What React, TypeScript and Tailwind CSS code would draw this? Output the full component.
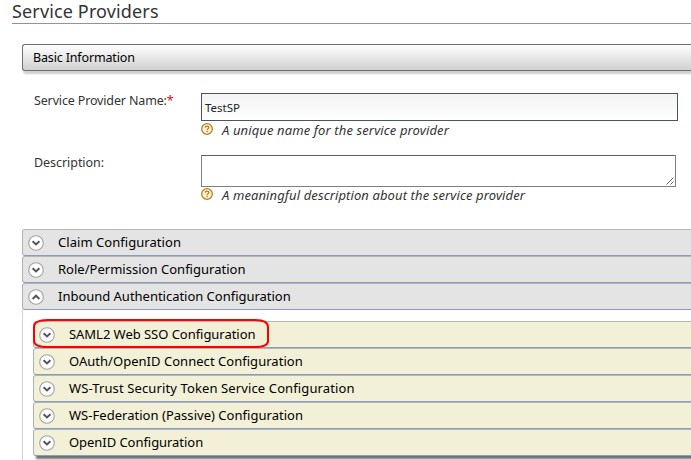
import React from "react";

function Toggle({ up = false }: { up?: boolean }) {
  return (
    <svg className="block h-4 w-4 shrink-0" viewBox="0 0 16 16" fill="none">
      <circle cx="8" cy="8" r="7.3" fill="#fff" stroke="#a3a3a3" strokeWidth="1.1" />
      <path d={up ? "M4.6 9.9L8 6.7L11.4 9.9" : "M4.6 6.3L8 9.5L11.4 6.3"} stroke="#555" strokeWidth="2" />
    </svg>
  );
}

function Hint({ children, spacing }: { children: React.ReactNode; spacing: string }) {
  return (
    <div className="flex h-[18px] items-start">
      <svg className="mt-[2px] block h-3 w-3 shrink-0" viewBox="0 0 12 12" fill="none">
        <circle cx="6" cy="6" r="5.3" fill="#fff6cf" stroke="#b08128" strokeWidth="1.3" />
        <path d="M4.2 4.6C4.3 2.5 7.8 2.6 7.8 4.6C7.8 5.8 6.1 5.7 6.1 7.2" stroke="#d4731a" strokeWidth="1.3" />
        <path d="M5.4 8.1H6.8V9.3H5.4Z" fill="#d4731a" />
      </svg>
      <span className={"ml-[9px] text-[13px] italic text-[#333] " + spacing}>{children}</span>
    </div>
  );
}

const sections = [
  { label: "Claim Configuration", spacing: "tracking-[0.05px]" },
  { label: "Role/Permission Configuration", spacing: "tracking-[0.02px]" },
  { label: "Inbound Authentication Configuration", spacing: "tracking-[-0.02px]", open: true },
];

const protocols = [
  { label: "SAML2 Web SSO Configuration", spacing: "tracking-[-0.04px]" },
  { label: "OAuth/OpenID Connect Configuration", spacing: "tracking-[0.03px]" },
  { label: "WS-Trust Security Token Service Configuration", spacing: "tracking-[0.12px]" },
  { label: "WS-Federation (Passive) Configuration", spacing: "tracking-[0.03px]" },
  { label: "OpenID Configuration", spacing: "tracking-[-0.05px]" },
];

function Row({ label, spacing, open, tone }: { label: string; spacing: string; open?: boolean; tone: string }) {
  return (
    <div className={"flex h-[27px] items-center rounded-l-[3px] border border-r-0 border-t-[#b5b5b5] border-l-[#b0b0b0] border-b-[#8a9cbf] pl-[5px] " + tone}>
      <Toggle up={open} />
      <span className={"ml-[14px] pb-[2px] text-[13px] leading-[18px] text-black " + spacing}>{label}</span>
    </div>
  );
}

export default function App() {
  return (
    <main className="h-[460px] w-[691px] overflow-hidden bg-white font-['Noto_Sans','Open_Sans',sans-serif] whitespace-nowrap">
      <h1 className="ml-3 h-6 border-b border-[#8893b4] text-[18px] leading-[22px] text-[#333]">
        <span className="block tracking-[0.14px]">Service Providers</span>
      </h1>
      <div className="mt-5 ml-[22px] h-[27px] rounded-l-[3px] border border-r-0 border-[#707070] bg-linear-to-b from-white to-[#d0d0d0] pl-[10px] text-[12.5px] leading-[26px] text-black shadow-[1px_3px_2px_#d0d0d0]">
        <span className="tracking-[-0.15px]">Basic Information</span>
      </div>
      <div className="mt-[22px] ml-[34px] flex h-[62px]">
        <div className="w-[167px] shrink-0 text-[12.5px] leading-[16px] text-[#333]">
          <span className="tracking-[-0.15px]">Service Provider Name:</span><span className="text-red-600">*</span>
        </div>
        <div>
          <div className="flex h-7 w-[477px] items-center border border-[#46536a] bg-linear-to-b from-[#f3f3f3] to-white pt-[2px] pl-[3px] text-[11.5px] text-[#222]">
            <span className="tracking-[0px]">TestSP</span>
          </div>
          <Hint spacing="leading-[19px] tracking-[0.12px]">A unique name for the service provider</Hint>
        </div>
      </div>
      <div className="ml-[34px] flex h-[74px]">
        <div className="w-[167px] shrink-0 text-[12.5px] leading-[16px] text-[#333]">
          <span className="tracking-[-0.05px]">Description:</span>
        </div>
        <div>
          <div className="flex h-8 w-[475px] items-end justify-end border border-[#808080] border-t-[#606060] bg-white">
            <svg className="mr-[1px] mb-[1px] block h-2 w-2" viewBox="0 0 8 8" stroke="#666" fill="none">
              <path d="M0.5 7.5L7.5 0.5M4.5 7.5L7.5 4.5" />
            </svg>
          </div>
          <div className="-mt-px">
            <Hint spacing="leading-[18px] tracking-[0.11px]">A meaningful description about the service provider</Hint>
          </div>
        </div>
      </div>
      <div className="ml-[22px]">
        {sections.map((s) => <Row key={s.label} {...s} tone="bg-[#e4e4e4]" />)}
        <div className="h-[150px] border-l border-[#d3d3d3] pt-[11px] pl-[10px]">
          <div className="relative shadow-[3px_3px_2px_#707070]">
            {protocols.map((p) => <Row key={p.label} {...p} tone="bg-[#f2f0d6]" />)}
            <svg className="absolute -top-[2px] left-0 h-[30px] w-[237px]" viewBox="0 0 237 30" fill="none">
              <path d="M15 1H222Q235 1 235 8V22Q235 28 222 28H15Q1 28 1 22V8Q1 1 15 1Z" stroke="#f00" strokeWidth="2" />
            </svg>
          </div>
        </div>
      </div>
    </main>
  );
}
